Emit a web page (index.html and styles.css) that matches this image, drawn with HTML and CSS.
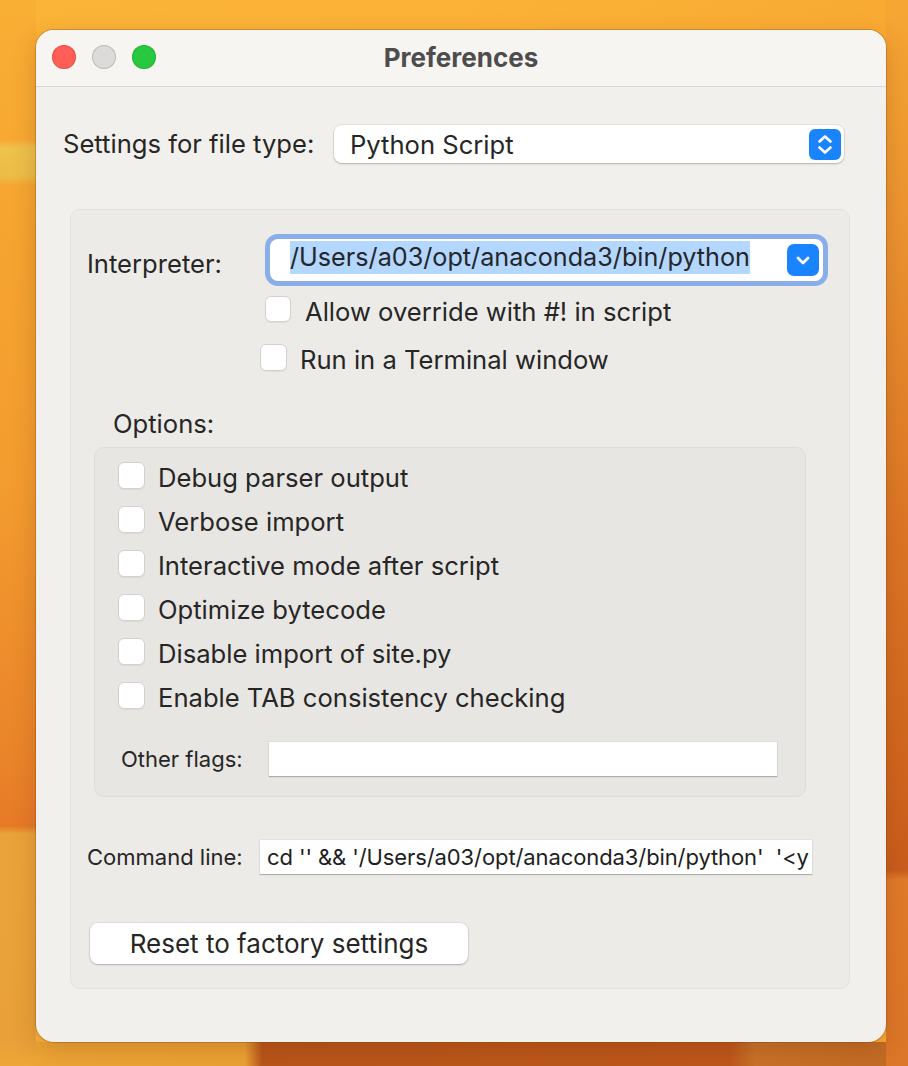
FILE: index.html
```html
<!DOCTYPE html>
<html>
<head>
<meta charset="utf-8">
<link rel="stylesheet" href="styles.css">
</head>
<body>
<div class="window">
  <div class="titlebar">
    <div class="lights">
      <span class="light red"></span>
      <span class="light gray"></span>
      <span class="light green"></span>
    </div>
    <div class="title">Preferences</div>
    <div></div>
  </div>

  <div class="filetype-row">
    <span class="label">Settings for file type:</span>
    <div class="popup">
      <span class="popup-text">Python Script</span>
      <span class="stepper">
        <svg width="32" height="31" viewBox="0 0 32 31"><path d="M10.5 12.5 L16 7.5 L21.5 12.5 M10.5 18.5 L16 23.5 L21.5 18.5" fill="none" stroke="#fff" stroke-width="2.6" stroke-linecap="round" stroke-linejoin="round"/></svg>
      </span>
    </div>
  </div>

  <div class="group">
    <div class="interp-row">
      <span class="label interp-label">Interpreter:</span>
      <div class="combo">
        <span class="sel">/Users/a03/opt/anaconda3/bin/python</span>
        <span class="combo-btn">
          <svg width="32" height="32" viewBox="0 0 32 32"><path d="M11 14 L16 19 L21 14" fill="none" stroke="#fff" stroke-width="2.8" stroke-linecap="round" stroke-linejoin="round"/></svg>
        </span>
      </div>
    </div>
    <div class="check allow"><span class="box"></span><span class="ctext">Allow override with #! in script</span></div>
    <div class="check run"><span class="box"></span><span class="ctext">Run in a Terminal window</span></div>

    <div class="options-label">Options:</div>
    <div class="inner">
      <div class="check-list">
        <div class="check"><span class="box"></span><span class="ctext">Debug parser output</span></div>
        <div class="check"><span class="box"></span><span class="ctext">Verbose import</span></div>
        <div class="check"><span class="box"></span><span class="ctext">Interactive mode after script</span></div>
        <div class="check"><span class="box"></span><span class="ctext">Optimize bytecode</span></div>
        <div class="check"><span class="box"></span><span class="ctext">Disable import of site.py</span></div>
        <div class="check"><span class="box"></span><span class="ctext">Enable TAB consistency checking</span></div>
      </div>
      <div class="flags-row">
        <span class="small-label">Other flags:</span>
        <div class="field"></div>
      </div>
    </div>

    <div class="cmd-row">
      <span class="small-label">Command line:</span>
      <div class="field cmd">cd '' &amp;&amp; '/Users/a03/opt/anaconda3/bin/python'&nbsp; '&lt;y</div>
    </div>

    <button class="reset">Reset to factory settings</button>
  </div>
</div>
</body>
</html>
```

FILE: styles.css
```css
* { box-sizing: border-box; }

html, body {
  margin: 0;
  padding: 0;
}

body {
  width: 908px;
  height: 1066px;
  overflow: hidden;
  font-family: "Inter", "Liberation Sans", sans-serif;
  color: #262626;
  padding-top: 30px;
  padding-left: 36px;
  background:
    linear-gradient(180deg, #f9ae34 0, #f7a932 140px, #eec24c 148px, #ecbd47 176px, #f6a631 186px, #f39c2f 480px, #ea842a 760px, #e77a27 826px, #eaa33a 834px, #e9a039 1040px, #eea637 1066px) left top / 36px 100% no-repeat,
    linear-gradient(180deg, #f6a733 0, #eb9230 250px, #dd7726 520px, #d0661f 760px, #c95d1c 870px, #e07b2a 880px, #dc7628 1066px) right top / 22px 100% no-repeat,
    linear-gradient(90deg, #eea637 0, #eca235 245px, #b9561a 262px, #bd581a 730px, #c9722a 755px, #c26a24 908px) left bottom / 100% 24px no-repeat,
    linear-gradient(90deg, #fbb338 0, #fbb236 50%, #f8aa33 100%);
}

.window {
  width: 850px;
  height: 1012px;
  border-radius: 18px;
  background: #f2f0ec;
  overflow: hidden;
  box-shadow: 0 0 0 1px rgba(120, 70, 20, 0.3), 0 8px 24px rgba(100, 40, 0, 0.22);
}

/* Title bar */
.titlebar {
  height: 57px;
  background: #f7f5f2;
  border-bottom: 1px solid #d9d7d3;
  display: grid;
  grid-template-columns: 1fr auto 1fr;
  align-items: center;
}

.lights {
  display: flex;
  gap: 16px;
  padding-left: 16px;
  padding-bottom: 2px;
}

.light {
  width: 24px;
  height: 24px;
  border-radius: 50%;
}
.light.red { background: #fe5f57; box-shadow: inset 0 0 0 1px rgba(200, 50, 40, 0.35); }
.light.gray { background: #dcdbd9; box-shadow: inset 0 0 0 1px rgba(0, 0, 0, 0.15); }
.light.green { background: #28c840; box-shadow: inset 0 0 0 1px rgba(20, 140, 40, 0.35); }

.title {
  font-weight: 700;
  font-size: 26px;
  color: #4d4d4d;
  padding-bottom: 2px;
}

/* File type row */
.filetype-row {
  display: grid;
  grid-template-columns: 271px 1fr;
  align-items: center;
  padding: 38px 42px 0 27px;
}

.label {
  font-size: 25.6px;
  line-height: 32px;
  white-space: nowrap;
}

.popup {
  height: 38px;
  background: #fff;
  border-radius: 8px;
  box-shadow: 0 0 0 1px rgba(0, 0, 0, 0.05), 0 1px 2px rgba(0, 0, 0, 0.22);
  display: flex;
  align-items: center;
  justify-content: space-between;
  padding: 0 3px 0 16px;
}

.popup-text {
  font-size: 25.6px;
}

.stepper {
  width: 32px;
  height: 31px;
  border-radius: 6px;
  background: #1a84ff;
  display: flex;
}

/* Group */
.group {
  margin: 46px 36px 0 34px;
  background: #edebe7;
  border: 1px solid #e3e1dd;
  border-radius: 10px;
  padding: 29px 0 24px 0;
}

.interp-row {
  display: grid;
  grid-template-columns: 183px 1fr;
  align-items: start;
  padding: 0 26px 0 16px;
}

.interp-label {
  margin-top: 9px;
}

.combo {
  height: 42px;
  background: #fff;
  border-radius: 8px;
  box-shadow: 0 0 0 5px #89aeea;
  display: flex;
  align-items: center;
  justify-content: space-between;
  padding: 0 4px 0 20px;
}

.sel {
  align-self: flex-start;
  margin-top: 2px;
  background: #b3d7ff;
  font-size: 25.2px;
  line-height: 33px;
  white-space: nowrap;
}

.combo-btn {
  width: 32px;
  height: 32px;
  border-radius: 7px;
  background: #1a84ff;
  display: flex;
}

/* Checkboxes */
.check {
  display: flex;
  align-items: flex-start;
  height: 27px;
  font-size: 25.6px;
  line-height: 27px;
  white-space: nowrap;
}

.ctext {
  padding-top: 2px;
}

.box {
  width: 27px;
  height: 27px;
  flex: none;
  background: #fff;
  border: 1px solid #d3d1cd;
  border-radius: 6px;
  box-shadow: 0 1px 1px rgba(0, 0, 0, 0.05);
  margin-right: 13px;
}

.check.allow {
  margin: 15px 0 0 194px;
}
.check.allow .box {
  width: 26px;
  height: 26px;
  margin-right: 14px;
}

.check.run {
  margin: 21px 0 0 189px;
}

.options-label {
  font-size: 25.6px;
  line-height: 32px;
  margin-top: 37px;
  padding-left: 42px;
}

.inner {
  margin: 7px 43px 0 23px;
  background: #e8e6e2;
  border: 1px solid #dfddd9;
  border-radius: 10px;
  padding: 14px 28px 20px 23px;
}

.check-list {
  display: flex;
  flex-direction: column;
  gap: 17px;
}

.flags-row {
  display: grid;
  grid-template-columns: 148px 1fr;
  align-items: center;
  margin-top: 33px;
  padding-left: 3px;
}

.small-label {
  font-size: 22px;
  line-height: 26px;
  white-space: nowrap;
}

.field {
  height: 34px;
  background: #fff;
  box-shadow: 0 0 0 1px rgba(0, 0, 0, 0.04), 0 1px 1px rgba(0, 0, 0, 0.22);
}

.cmd-row {
  display: grid;
  grid-template-columns: 173px 1fr;
  align-items: center;
  margin-top: 43px;
  padding: 0 37px 0 16px;
}

.field.cmd {
  font-size: 22px;
  line-height: 34px;
  padding-left: 7px;
  letter-spacing: -0.1px;
  white-space: nowrap;
  overflow: hidden;
  color: #1e1e1e;
}

.reset {
  display: block;
  margin: 49px 0 0 19px;
  width: 378px;
  height: 41px;
  border: none;
  border-radius: 8px;
  background: #fff;
  box-shadow: 0 0 0 1px rgba(0, 0, 0, 0.05), 0 1px 2px rgba(0, 0, 0, 0.22);
  font-family: "Inter", "Liberation Sans", sans-serif;
  font-size: 26px;
  color: #262626;
  padding: 0;
}
```
